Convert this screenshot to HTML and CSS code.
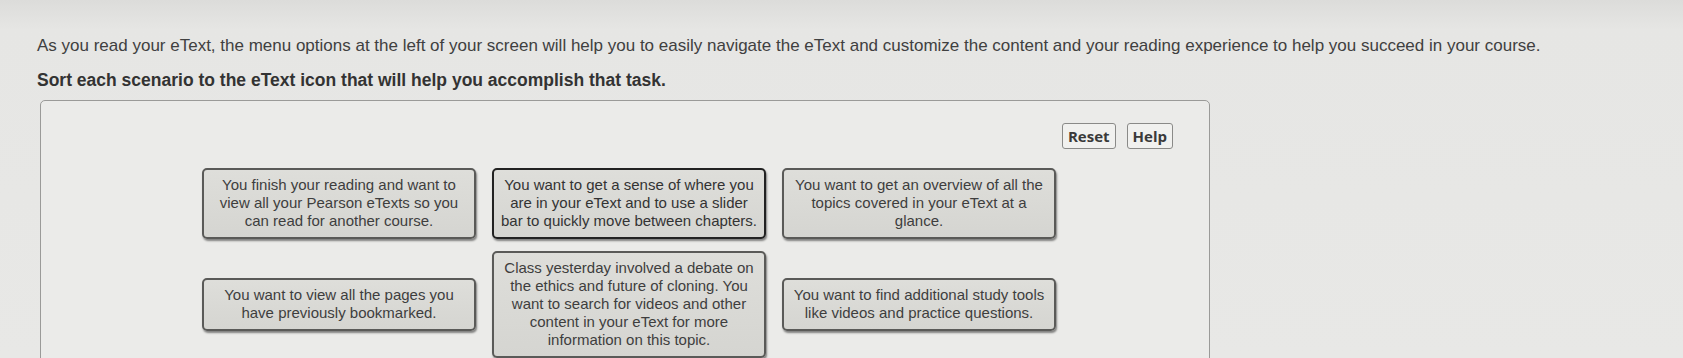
FILE: index.html
```html
<!DOCTYPE html>
<html>
<head>
<meta charset="utf-8">
<link rel="stylesheet" href="styles.css">
</head>
<body>
<div class="page">
  <p class="intro">As you read your eText, the menu options at the left of your screen will help you to easily navigate the eText and customize the content and your reading experience to help you succeed in your course.</p>
  <p class="task">Sort each scenario to the eText icon that will help you accomplish that task.</p>
  <div class="panel">
    <div class="tools">
      <button class="btn">Reset</button>
      <button class="btn">Help</button>
    </div>
    <div class="cards">
      <div class="card">You finish your reading and want to<br>view all your Pearson eTexts so you<br>can read for another course.</div>
      <div class="card card-active">You want to get a sense of where you<br>are in your eText and to use a slider<br>bar to quickly move between chapters.</div>
      <div class="card">You want to get an overview of all the<br>topics covered in your eText at a<br>glance.</div>
      <div class="card row2">You want to view all the pages you<br>have previously bookmarked.</div>
      <div class="card row2">Class yesterday involved a debate on<br>the ethics and future of cloning. You<br>want to search for videos and other<br>content in your eText for more<br>information on this topic.</div>
      <div class="card row2">You want to find additional study tools<br>like videos and practice questions.</div>
    </div>
  </div>
</div>
</body>
</html>
```

FILE: styles.css
```css
html, body {
  margin: 0;
  padding: 0;
}
body {
  background: linear-gradient(to bottom, #dcdcda 0px, #e6e6e4 30px, #e8e8e6 100%);
  font-family: "Liberation Sans", Arial, sans-serif;
  color: #3c3c3c;
  width: 1683px;
  height: 358px;
  overflow: hidden;
}
.page {
  padding: 35px 0 0 37px;
}
.intro {
  margin: 0;
  font-size: 17px;
  line-height: 21px;
  color: #404040;
}
.task {
  margin: 14px 0 0 0;
  font-size: 17.5px;
  line-height: 21px;
  font-weight: bold;
  color: #333;
}
.panel {
  margin: 9px 0 0 3px;
  width: 1170px;
  height: 320px;
  border: 1px solid #9a9a98;
  border-radius: 5px;
  background: #ebebe9;
  box-sizing: border-box;
  padding: 22px 36px 0 161px;
}
.tools {
  display: flex;
  justify-content: flex-end;
  gap: 11px;
}
.btn {
  font-family: "Open Sans", "Liberation Sans", sans-serif;
  font-weight: bold;
  font-size: 15px;
  color: #3a3a3a;
  background: #f1f1ef;
  border: 1px solid #8a8a88;
  border-radius: 3px;
  height: 26px;
  line-height: 22px;
  padding: 0 5px;
  margin: 0;
}
.cards {
  margin-top: 19px;
  display: grid;
  grid-template-columns: repeat(3, 274px);
  column-gap: 16px;
  row-gap: 12px;
  align-items: start;
}
.card {
  box-sizing: border-box;
  background: linear-gradient(to bottom, #dededa, #d5d5d1);
  border: 2px solid #5a5a58;
  border-radius: 5px;
  box-shadow: 1px 2px 2px rgba(0, 0, 0, 0.45);
  padding: 6px 2px 7px;
  font-size: 15px;
  line-height: 18px;
  text-align: center;
  color: #3e3e3e;
  white-space: nowrap;
  overflow: hidden;
}
.card-active {
  border-color: #222;
  color: #333;
}
.row2 {
  align-self: center;
}
```
